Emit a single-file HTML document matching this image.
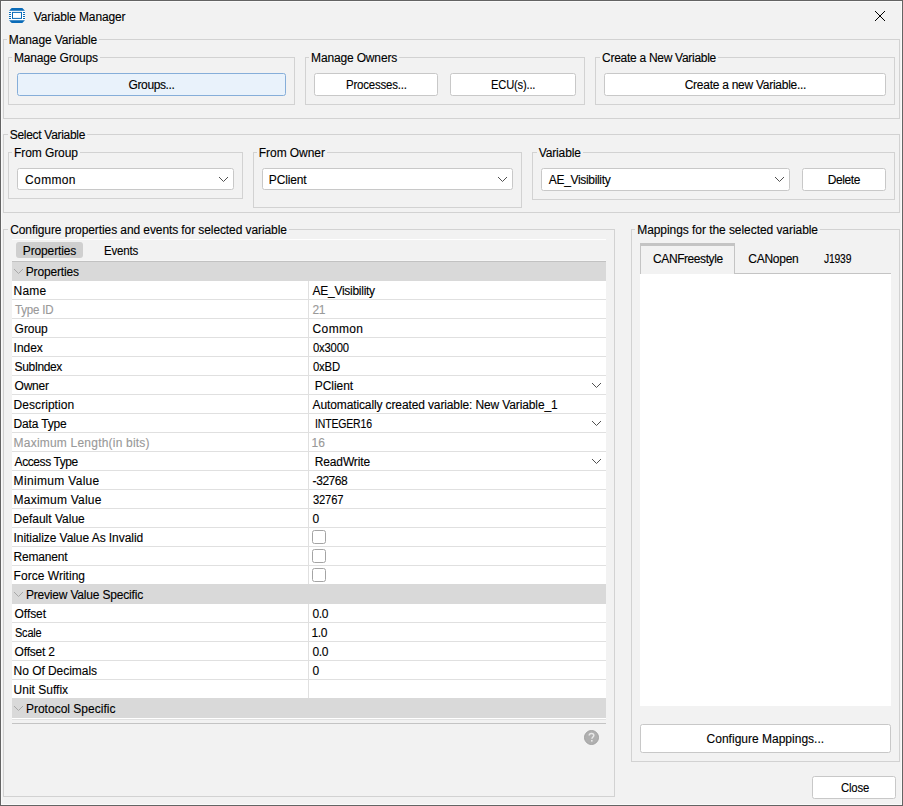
<!DOCTYPE html>
<html><head><meta charset="utf-8">
<style>
html,body{margin:0;padding:0}
body{width:903px;height:806px;position:relative;overflow:hidden;background:#f2f2f2;font-family:"Liberation Sans",sans-serif}
div,svg{box-sizing:border-box}
.a{position:absolute}
.t{position:absolute;font-size:12px;line-height:14px;white-space:nowrap;color:#000;-webkit-text-stroke:0.12px currentColor}
.lb{background:#f2f2f2;padding:0 2px}
.d{color:#999}
.gb{position:absolute;border:1px solid #d2d2d2}
.btn{position:absolute;background:#fff;border:1px solid #c8c8c8;border-radius:2.5px}
.sep{position:absolute;background:#e0e0e0}
.chk{position:absolute;width:14px;height:14px;border:1px solid #a4a4a4;border-radius:2.5px;background:#fff}
</style></head><body>
<div class="a" style="left:0;top:0;width:903px;height:806px;border:1px solid #646464"></div>
<div class="a" style="left:1px;top:1px;width:901px;height:804px;border:1px solid #fafafa"></div>
<svg class="a" style="left:9px;top:8px" width="16" height="16" viewBox="0 0 16 16">
<rect x="0" y="2.7" width="16" height="9.6" fill="#fff"/>
<path d="M2.7 0H13.3L16 2.7V2.8H0V2.7Z" fill="#0a6bb8"/>
<path d="M0 12.2H16V12.3L13.3 15H2.7L0 12.3Z" fill="#0a6bb8"/>
<rect x="3.5" y="4.4" width="9" height="6" fill="none" stroke="#0a6bb8" stroke-width="1"/>
<g fill="#0a6bb8"><rect x="0" y="4" width="2" height="1"/><rect x="0" y="6" width="2" height="1"/><rect x="0" y="8" width="2" height="1"/><rect x="0" y="10" width="2" height="1"/>
<rect x="14" y="4" width="2" height="1"/><rect x="14" y="6" width="2" height="1"/><rect x="14" y="8" width="2" height="1"/><rect x="14" y="10" width="2" height="1"/></g>
</svg>
<svg class="a" style="left:873px;top:9px" width="14" height="14" viewBox="0 0 14 14"><path d="M2 2L12 12M12 2L2 12" stroke="#000" stroke-width="1"/></svg>
<div class="gb" style="left:3px;top:39px;width:897px;height:80px"></div>
<div class="gb" style="left:8px;top:57px;width:287px;height:48px"></div>
<div class="gb" style="left:305px;top:57px;width:280px;height:48px"></div>
<div class="gb" style="left:595px;top:57px;width:300px;height:48px"></div>
<div class="gb" style="left:3px;top:134px;width:897px;height:79px"></div>
<div class="gb" style="left:8px;top:152px;width:235px;height:47px"></div>
<div class="gb" style="left:253px;top:152px;width:269px;height:56px"></div>
<div class="gb" style="left:532px;top:152px;width:363px;height:48px"></div>
<div class="gb" style="left:3px;top:229px;width:612px;height:568px"></div>
<div class="gb" style="left:631px;top:229px;width:269px;height:533px"></div>
<div class="btn" style="left:17px;top:73px;width:269px;height:23px;background:#e9f2fb;border-color:#86aed9"></div>
<div class="btn" style="left:314px;top:73px;width:124px;height:23px"></div>
<div class="btn" style="left:450px;top:73px;width:126px;height:23px"></div>
<div class="btn" style="left:604px;top:73px;width:282px;height:23px"></div>
<div class="btn" style="left:802px;top:168px;width:84px;height:23px"></div>
<div class="btn" style="left:640px;top:724px;width:251px;height:29px"></div>
<div class="btn" style="left:812px;top:776px;width:84px;height:23px"></div>
<div class="btn" style="left:17px;top:168px;width:217px;height:22px"></div>
<svg class="a" style="left:218px;top:176px" width="12" height="8"><polyline points="1,1 5.5,5.5 10,1" fill="none" stroke="#505050" stroke-width="1"/></svg>
<div class="btn" style="left:262px;top:168px;width:251px;height:22px"></div>
<svg class="a" style="left:497px;top:176px" width="12" height="8"><polyline points="1,1 5.5,5.5 10,1" fill="none" stroke="#505050" stroke-width="1"/></svg>
<div class="btn" style="left:541px;top:168px;width:249px;height:23px"></div>
<svg class="a" style="left:774px;top:176px" width="12" height="8"><polyline points="1,1 5.5,5.5 10,1" fill="none" stroke="#505050" stroke-width="1"/></svg>
<div class="a" style="left:12px;top:239px;width:594px;height:1px;background:#fff"></div>
<div class="a" style="left:16px;top:242px;width:67px;height:16px;background:#cfcfcf;border-radius:3px"></div>
<div class="a" style="left:12px;top:260px;width:594px;height:1px;background:#f6f6f6"></div>
<div class="a" style="left:12px;top:261px;width:594px;height:1px;background:#c2c2c2"></div>
<div class="a" style="left:12px;top:262px;width:594px;height:19px;background:#d9d9d9"></div>
<svg class="a" style="left:13px;top:268px" width="12" height="8"><polyline points="1,1 5.5,5.5 10,1" fill="none" stroke="#a8a8a8" stroke-width="1"/></svg>
<div class="a" style="left:12px;top:281px;width:594px;height:18px;background:#fff"></div>
<div class="sep" style="left:12px;top:299px;width:594px;height:1px"></div>
<div class="sep" style="left:308px;top:281px;width:1px;height:18px"></div>
<div class="a" style="left:12px;top:300px;width:594px;height:18px;background:#fff"></div>
<div class="sep" style="left:12px;top:318px;width:594px;height:1px"></div>
<div class="sep" style="left:308px;top:300px;width:1px;height:18px"></div>
<div class="a" style="left:12px;top:319px;width:594px;height:18px;background:#fff"></div>
<div class="sep" style="left:12px;top:337px;width:594px;height:1px"></div>
<div class="sep" style="left:308px;top:319px;width:1px;height:18px"></div>
<div class="a" style="left:12px;top:338px;width:594px;height:18px;background:#fff"></div>
<div class="sep" style="left:12px;top:356px;width:594px;height:1px"></div>
<div class="sep" style="left:308px;top:338px;width:1px;height:18px"></div>
<div class="a" style="left:12px;top:357px;width:594px;height:18px;background:#fff"></div>
<div class="sep" style="left:12px;top:375px;width:594px;height:1px"></div>
<div class="sep" style="left:308px;top:357px;width:1px;height:18px"></div>
<div class="a" style="left:12px;top:376px;width:594px;height:18px;background:#fff"></div>
<div class="sep" style="left:12px;top:394px;width:594px;height:1px"></div>
<div class="sep" style="left:308px;top:376px;width:1px;height:18px"></div>
<svg class="a" style="left:591px;top:382px" width="12" height="8"><polyline points="1,1 5.5,5.5 10,1" fill="none" stroke="#505050" stroke-width="1"/></svg>
<div class="a" style="left:12px;top:395px;width:594px;height:18px;background:#fff"></div>
<div class="sep" style="left:12px;top:413px;width:594px;height:1px"></div>
<div class="sep" style="left:308px;top:395px;width:1px;height:18px"></div>
<div class="a" style="left:12px;top:414px;width:594px;height:18px;background:#fff"></div>
<div class="sep" style="left:12px;top:432px;width:594px;height:1px"></div>
<div class="sep" style="left:308px;top:414px;width:1px;height:18px"></div>
<svg class="a" style="left:591px;top:420px" width="12" height="8"><polyline points="1,1 5.5,5.5 10,1" fill="none" stroke="#505050" stroke-width="1"/></svg>
<div class="a" style="left:12px;top:433px;width:594px;height:18px;background:#fff"></div>
<div class="sep" style="left:12px;top:451px;width:594px;height:1px"></div>
<div class="sep" style="left:308px;top:433px;width:1px;height:18px"></div>
<div class="a" style="left:12px;top:452px;width:594px;height:18px;background:#fff"></div>
<div class="sep" style="left:12px;top:470px;width:594px;height:1px"></div>
<div class="sep" style="left:308px;top:452px;width:1px;height:18px"></div>
<svg class="a" style="left:591px;top:458px" width="12" height="8"><polyline points="1,1 5.5,5.5 10,1" fill="none" stroke="#505050" stroke-width="1"/></svg>
<div class="a" style="left:12px;top:471px;width:594px;height:18px;background:#fff"></div>
<div class="sep" style="left:12px;top:489px;width:594px;height:1px"></div>
<div class="sep" style="left:308px;top:471px;width:1px;height:18px"></div>
<div class="a" style="left:12px;top:490px;width:594px;height:18px;background:#fff"></div>
<div class="sep" style="left:12px;top:508px;width:594px;height:1px"></div>
<div class="sep" style="left:308px;top:490px;width:1px;height:18px"></div>
<div class="a" style="left:12px;top:509px;width:594px;height:18px;background:#fff"></div>
<div class="sep" style="left:12px;top:527px;width:594px;height:1px"></div>
<div class="sep" style="left:308px;top:509px;width:1px;height:18px"></div>
<div class="a" style="left:12px;top:528px;width:594px;height:18px;background:#fff"></div>
<div class="sep" style="left:12px;top:546px;width:594px;height:1px"></div>
<div class="sep" style="left:308px;top:528px;width:1px;height:18px"></div>
<div class="chk" style="left:312px;top:530px"></div>
<div class="a" style="left:12px;top:547px;width:594px;height:18px;background:#fff"></div>
<div class="sep" style="left:12px;top:565px;width:594px;height:1px"></div>
<div class="sep" style="left:308px;top:547px;width:1px;height:18px"></div>
<div class="chk" style="left:312px;top:549px"></div>
<div class="a" style="left:12px;top:566px;width:594px;height:18px;background:#fff"></div>
<div class="sep" style="left:12px;top:584px;width:594px;height:1px"></div>
<div class="sep" style="left:308px;top:566px;width:1px;height:18px"></div>
<div class="chk" style="left:312px;top:568px"></div>
<div class="a" style="left:12px;top:604px;width:594px;height:18px;background:#fff"></div>
<div class="sep" style="left:12px;top:622px;width:594px;height:1px"></div>
<div class="sep" style="left:308px;top:604px;width:1px;height:18px"></div>
<div class="a" style="left:12px;top:623px;width:594px;height:18px;background:#fff"></div>
<div class="sep" style="left:12px;top:641px;width:594px;height:1px"></div>
<div class="sep" style="left:308px;top:623px;width:1px;height:18px"></div>
<div class="a" style="left:12px;top:642px;width:594px;height:18px;background:#fff"></div>
<div class="sep" style="left:12px;top:660px;width:594px;height:1px"></div>
<div class="sep" style="left:308px;top:642px;width:1px;height:18px"></div>
<div class="a" style="left:12px;top:661px;width:594px;height:18px;background:#fff"></div>
<div class="sep" style="left:12px;top:679px;width:594px;height:1px"></div>
<div class="sep" style="left:308px;top:661px;width:1px;height:18px"></div>
<div class="a" style="left:12px;top:680px;width:594px;height:18px;background:#fff"></div>
<div class="sep" style="left:12px;top:698px;width:594px;height:1px"></div>
<div class="sep" style="left:308px;top:680px;width:1px;height:18px"></div>
<div class="a" style="left:12px;top:584px;width:594px;height:20px;background:#d9d9d9"></div>
<svg class="a" style="left:13px;top:591px" width="12" height="8"><polyline points="1,1 5.5,5.5 10,1" fill="none" stroke="#a8a8a8" stroke-width="1"/></svg>
<div class="a" style="left:12px;top:698px;width:594px;height:20px;background:#d9d9d9"></div>
<svg class="a" style="left:13px;top:705px" width="12" height="8"><polyline points="1,1 5.5,5.5 10,1" fill="none" stroke="#a8a8a8" stroke-width="1"/></svg>
<div class="a" style="left:12px;top:718px;width:594px;height:1px;background:#fff"></div>
<div class="a" style="left:12px;top:719px;width:594px;height:1px;background:#e2e2e2"></div>
<div class="a" style="left:12px;top:723px;width:594px;height:1px;background:#c4c4c4"></div>
<svg class="a" style="left:583px;top:729px" width="17" height="17" viewBox="0 0 17 17"><circle cx="8.5" cy="8.5" r="7" fill="#b0b0b0" stroke="#a2a2a2" stroke-width="1"/><path d="M6.2 6.6C6.2 5.2 7.2 4.4 8.5 4.4C9.8 4.4 10.8 5.2 10.8 6.4C10.8 7.9 8.9 8 8.9 9.7" fill="none" stroke="#e8e8e8" stroke-width="1.5"/><rect x="8" y="11" width="1.6" height="1.6" fill="#e8e8e8"/></svg>
<div class="a" style="left:640px;top:243px;width:95px;height:31px;border-left:1px solid #c4c4c4;border-right:1px solid #c4c4c4;border-top:3px solid #c4c4c4;background:#f2f2f2"></div>
<div class="a" style="left:734px;top:273px;width:157px;height:1px;background:#c4c4c4"></div>
<div class="a" style="left:640px;top:274px;width:251px;height:432px;background:#fff"></div>
<div class="t" style="left:33.8px;top:10px;letter-spacing:-0.140px">Variable Manager</div>
<div class="t lb" style="left:6.8px;top:33px;letter-spacing:-0.107px">Manage Variable</div>
<div class="t lb" style="left:11.9px;top:51px;letter-spacing:-0.158px">Manage Groups</div>
<div class="t lb" style="left:309.1px;top:51px;letter-spacing:-0.158px">Manage Owners</div>
<div class="t lb" style="left:600.1px;top:51px;letter-spacing:-0.285px">Create a New Variable</div>
<div class="t lb" style="left:7.7px;top:128px;letter-spacing:-0.293px">Select Variable</div>
<div class="t lb" style="left:12.0px;top:146px;letter-spacing:-0.078px">From Group</div>
<div class="t lb" style="left:256.8px;top:146px;letter-spacing:-0.056px">From Owner</div>
<div class="t lb" style="left:536.8px;top:146px;letter-spacing:-0.157px">Variable</div>
<div class="t lb" style="left:8.2px;top:223px;letter-spacing:-0.092px">Configure properties and events for selected variable</div>
<div class="t lb" style="left:635.2px;top:223px;letter-spacing:-0.058px">Mappings for the selected variable</div>
<div class="t" style="left:128.5px;top:78px;letter-spacing:-0.375px">Groups...</div>
<div class="t" style="left:345.5px;top:78px;letter-spacing:-0.200px;transform:scaleX(0.955);transform-origin:0 0">Processes...</div>
<div class="t" style="left:490.6px;top:78px;letter-spacing:-0.200px;transform:scaleX(0.931);transform-origin:0 0">ECU(s)...</div>
<div class="t" style="left:684.7px;top:78px;letter-spacing:-0.265px">Create a new Variable...</div>
<div class="t" style="left:827.7px;top:173px;letter-spacing:-0.380px">Delete</div>
<div class="t" style="left:706.6px;top:732px;letter-spacing:0.005px">Configure Mappings...</div>
<div class="t" style="left:840.5px;top:781px;letter-spacing:-0.200px;transform:scaleX(0.944);transform-origin:0 0">Close</div>
<div class="t" style="left:25.1px;top:173px;letter-spacing:0.350px">Common</div>
<div class="t" style="left:268.8px;top:173px;letter-spacing:-0.133px">PClient</div>
<div class="t" style="left:548.8px;top:173px;letter-spacing:-0.325px">AE_Visibility</div>
<div class="t" style="left:22.8px;top:244px;letter-spacing:-0.133px">Properties</div>
<div class="t" style="left:103.8px;top:244px;letter-spacing:-0.200px;transform:scaleX(0.960);transform-origin:0 0">Events</div>
<div class="t" style="left:653.1px;top:252px;letter-spacing:-0.427px">CANFreestyle</div>
<div class="t" style="left:748.3px;top:252px;letter-spacing:-0.267px">CANopen</div>
<div class="t" style="left:823.6px;top:252px;letter-spacing:-0.200px;transform:scaleX(0.860);transform-origin:0 0">J1939</div>
<div class="t" style="left:13.6px;top:284px;letter-spacing:0.200px">Name</div>
<div class="t" style="left:312.6px;top:284px;letter-spacing:-0.275px">AE_Visibility</div>
<div class="t d" style="left:14.6px;top:303px;letter-spacing:-0.200px;transform:scaleX(0.962);transform-origin:0 0">Type ID</div>
<div class="t d" style="left:312.6px;top:303px;letter-spacing:-0.450px">21</div>
<div class="t" style="left:14.6px;top:322px;letter-spacing:-0.050px">Group</div>
<div class="t" style="left:312.6px;top:322px;letter-spacing:0.350px">Common</div>
<div class="t" style="left:13.6px;top:341px;letter-spacing:-0.025px">Index</div>
<div class="t" style="left:312.6px;top:341px;letter-spacing:-0.200px;transform:scaleX(0.939);transform-origin:0 0">0x3000</div>
<div class="t" style="left:14.6px;top:360px;letter-spacing:-0.429px">SubIndex</div>
<div class="t" style="left:312.6px;top:360px;letter-spacing:-0.200px;transform:scaleX(0.944);transform-origin:0 0">0xBD</div>
<div class="t" style="left:14.6px;top:379px;letter-spacing:-0.250px">Owner</div>
<div class="t" style="left:314.7px;top:379px;letter-spacing:-0.033px">PClient</div>
<div class="t" style="left:13.6px;top:398px;letter-spacing:0.050px">Description</div>
<div class="t" style="left:312.6px;top:398px;letter-spacing:-0.122px">Automatically created variable: New Variable_1</div>
<div class="t" style="left:13.6px;top:417px;letter-spacing:-0.163px">Data Type</div>
<div class="t" style="left:314.8px;top:417px;letter-spacing:-0.200px;transform:scaleX(0.876);transform-origin:0 0">INTEGER16</div>
<div class="t d" style="left:13.6px;top:436px;letter-spacing:0.209px">Maximum Length(in bits)</div>
<div class="t d" style="left:311.6px;top:436px;letter-spacing:-0.100px">16</div>
<div class="t" style="left:14.6px;top:455px;letter-spacing:-0.420px">Access Type</div>
<div class="t" style="left:314.7px;top:455px;letter-spacing:-0.125px">ReadWrite</div>
<div class="t" style="left:13.6px;top:474px;letter-spacing:0.325px">Minimum Value</div>
<div class="t" style="left:312.6px;top:474px;letter-spacing:-0.440px">-32768</div>
<div class="t" style="left:13.6px;top:493px;letter-spacing:0.225px">Maximum Value</div>
<div class="t" style="left:312.6px;top:493px;letter-spacing:-0.200px;transform:scaleX(0.935);transform-origin:0 0">32767</div>
<div class="t" style="left:13.6px;top:512px;letter-spacing:0.000px">Default Value</div>
<div class="t" style="left:312.6px;top:512px;letter-spacing:0.000px">0</div>
<div class="t" style="left:13.6px;top:531px;letter-spacing:-0.062px">Initialize Value As Invalid</div>
<div class="t" style="left:13.6px;top:550px;letter-spacing:-0.200px">Remanent</div>
<div class="t" style="left:13.6px;top:569px;letter-spacing:0.025px">Force Writing</div>
<div class="t" style="left:14.6px;top:607px;letter-spacing:-0.080px">Offset</div>
<div class="t" style="left:312.6px;top:607px;letter-spacing:-0.450px">0.0</div>
<div class="t" style="left:14.6px;top:626px;letter-spacing:-0.200px;transform:scaleX(0.911);transform-origin:0 0">Scale</div>
<div class="t" style="left:311.6px;top:626px;letter-spacing:-0.450px">1.0</div>
<div class="t" style="left:14.6px;top:645px;letter-spacing:-0.200px">Offset 2</div>
<div class="t" style="left:312.6px;top:645px;letter-spacing:-0.450px">0.0</div>
<div class="t" style="left:13.6px;top:664px;letter-spacing:-0.046px">No Of Decimals</div>
<div class="t" style="left:312.6px;top:664px;letter-spacing:0.000px">0</div>
<div class="t" style="left:13.6px;top:683px;letter-spacing:-0.000px">Unit Suffix</div>
<div class="t" style="left:25.7px;top:265px;letter-spacing:-0.144px">Properties</div>
<div class="t" style="left:25.9px;top:588px;letter-spacing:-0.186px">Preview Value Specific</div>
<div class="t" style="left:25.9px;top:702px;letter-spacing:0.012px">Protocol Specific</div>
</body></html>
